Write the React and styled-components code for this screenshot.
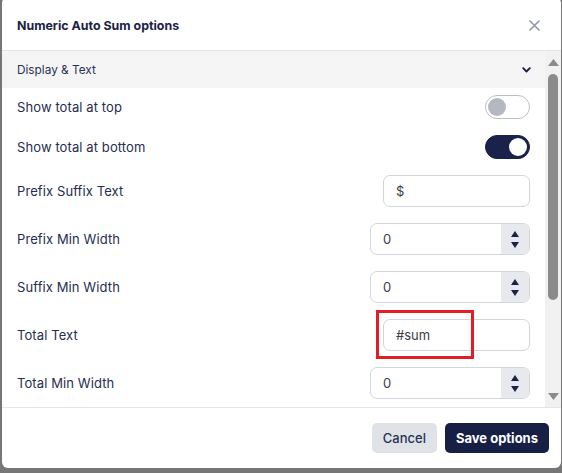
import React from "react";
import styled, { createGlobalStyle } from "styled-components";

const Global = createGlobalStyle`
  html, body { margin: 0; padding: 0; height: 100%; }
  body {
    background: #767676;
    font-family: Inter, "Noto Sans", sans-serif;
    overflow: hidden;
  }
  #root { height: 100%; }
`;

const Page = styled.div`
  height: 473px;
  padding: 0 1px 0 2px;
  box-sizing: border-box;
`;

const Modal = styled.div`
  margin-top: -3px;
  height: 471px;
  background: #fff;
  border-radius: 6px;
  display: flex;
  flex-direction: column;
  overflow: hidden;
`;

const Header = styled.div`
  height: 54px;
  box-sizing: border-box;
  padding: 3px 20px 0 15px;
  display: flex;
  align-items: center;
  justify-content: space-between;
  border-bottom: 1px solid #e3e5ea;
`;

const Title = styled.h2`
  margin: 0;
  font-size: 12.4px;
  font-weight: 700;
  color: #1c2244;
`;

const Close = styled.button`
  border: 0;
  background: none;
  padding: 0;
  width: 14px;
  height: 14px;
  display: flex;
  align-items: center;
  justify-content: center;
  cursor: pointer;
`;

const Body = styled.div`
  height: 356px;
  display: flex;
`;

const Content = styled.div`
  flex: 1;
  overflow: hidden;
`;

const ScrollBar = styled.div`
  width: 16px;
  background: #f1f1f1;
  display: flex;
  flex-direction: column;
  align-items: center;
`;

const ScrollArrow = styled.div`
  height: ${(p) => (p.$down ? "14px" : "15px")};
  display: flex;
  align-items: ${(p) => (p.$down ? "flex-start" : "flex-end")};
  justify-content: center;
`;

const Thumb = styled.div`
  width: 10px;
  height: 226px;
  margin-top: 8px;
  border-radius: 5px;
  background: #8b8b8b;
`;

const Spacer = styled.div`
  flex: 1;
`;

const SectionHead = styled.div`
  height: 37px;
  background: #f5f5f6;
  display: flex;
  align-items: center;
  justify-content: space-between;
  padding: 0 14px 0 15px;
  font-size: 11.8px;
  color: #2a3052;
`;

const Rows = styled.div`
  display: flex;
  flex-direction: column;
  gap: 16px;
  padding: 7px 15px 20px 15px;
`;

const Row = styled.div`
  display: flex;
  align-items: center;
  justify-content: space-between;
  height: ${(p) => (p.$toggle ? "24px" : "32px")};
`;

const Label = styled.span`
  font-size: 13px;
  font-weight: 400;
  letter-spacing: 0.1px;
  color: #262d50;
`;

const Switch = styled.div`
  width: 45px;
  height: 24px;
  box-sizing: border-box;
  border-radius: 12px;
  border: 1px solid ${(p) => (p.$on ? "#1a224a" : "#b9bec6")};
  background: ${(p) => (p.$on ? "#1a224a" : "#fff")};
  display: flex;
  align-items: center;
  justify-content: ${(p) => (p.$on ? "flex-end" : "flex-start")};
  padding: 0 2px;
`;

const Knob = styled.div`
  width: 18px;
  height: 18px;
  border-radius: 50%;
  background: ${(p) => (p.$on ? "#fff" : "#b4b9c1")};
`;

const TextBox = styled.div`
  position: relative;
  width: 147px;
  height: 32px;
`;

const TextInput = styled.input`
  width: 100%;
  height: 100%;
  box-sizing: border-box;
  border: 1px solid #d3d6dc;
  border-radius: 7px;
  padding: 0 12px;
  font-family: inherit;
  font-size: 13px;
  color: #3a3d45;
  outline: none;
`;

const Highlight = styled.div`
  position: absolute;
  left: -7px;
  top: -9px;
  width: 98px;
  height: 49px;
  box-sizing: border-box;
  border: 3px solid #e21d24;
  pointer-events: none;
`;

const NumberBox = styled.div`
  width: 160px;
  height: 32px;
  box-sizing: border-box;
  border: 1px solid #d3d6dc;
  border-radius: 7px;
  display: flex;
  overflow: hidden;
`;

const NumberValue = styled.span`
  flex: 1;
  display: flex;
  align-items: center;
  padding-left: 12px;
  font-size: 13px;
  color: #3a3d45;
`;

const Spinner = styled.div`
  width: 28px;
  background: #e7e9ee;
  display: flex;
  flex-direction: column;
  align-items: center;
  justify-content: center;
  gap: 5px;
`;

const Footer = styled.div`
  flex: 1;
  border-top: 1px solid #e3e5ea;
  display: flex;
  align-items: center;
  justify-content: flex-end;
  gap: 8px;
  padding: 0 12px 0 0;
`;

const Button = styled.button`
  height: 30px;
  border: 0;
  border-radius: 5px;
  padding: 0 11px;
  font-family: inherit;
  font-size: 13px;
  line-height: 30px;
  font-weight: ${(p) => (p.$primary ? 700 : 500)};
  background: ${(p) => (p.$primary ? "#171f45" : "#dfe3e8")};
  color: ${(p) => (p.$primary ? "#fff" : "#283052")};
  cursor: pointer;
`;

const Tri = ({ down }) => (
  <svg width="8" height="6" viewBox="0 0 8 6">
    <path d={down ? "M0 0h8L4 6z" : "M4 0l4 6H0z"} fill="#1c2244" />
  </svg>
);

const BarTri = ({ down }) => (
  <svg width="11" height="7" viewBox="0 0 11 7">
    <path d={down ? "M0 0h11L5.5 7z" : "M5.5 0L11 7H0z"} fill="#8b8b8b" />
  </svg>
);

const NumberField = ({ value }) => (
  <NumberBox>
    <NumberValue>{value}</NumberValue>
    <Spinner>
      <Tri />
      <Tri down />
    </Spinner>
  </NumberBox>
);

export default function App() {
  return (
    <>
      <Global />
      <Page>
        <Modal>
          <Header>
            <Title>Numeric Auto Sum options</Title>
            <Close aria-label="Close">
              <svg width="11" height="11" viewBox="0 0 11 11">
                <path d="M1 1l9 9M10 1l-9 9" stroke="#9096a6" strokeWidth="1.6" strokeLinecap="round" />
              </svg>
            </Close>
          </Header>
          <Body>
            <Content>
              <SectionHead>
                <span>Display &amp; Text</span>
                <svg width="9" height="6" viewBox="0 0 9 6">
                  <path d="M1.2 1.2L4.5 4.5 7.8 1.2" stroke="#1c2244" strokeWidth="1.9" fill="none" strokeLinecap="round" strokeLinejoin="round" />
                </svg>
              </SectionHead>
              <Rows>
                <Row $toggle>
                  <Label>Show total at top</Label>
                  <Switch><Knob /></Switch>
                </Row>
                <Row $toggle>
                  <Label>Show total at bottom</Label>
                  <Switch $on><Knob $on /></Switch>
                </Row>
                <Row>
                  <Label>Prefix Suffix Text</Label>
                  <TextBox><TextInput defaultValue="$" /></TextBox>
                </Row>
                <Row>
                  <Label>Prefix Min Width</Label>
                  <NumberField value="0" />
                </Row>
                <Row>
                  <Label>Suffix Min Width</Label>
                  <NumberField value="0" />
                </Row>
                <Row>
                  <Label>Total Text</Label>
                  <TextBox>
                    <TextInput defaultValue="#sum" />
                    <Highlight />
                  </TextBox>
                </Row>
                <Row>
                  <Label>Total Min Width</Label>
                  <NumberField value="0" />
                </Row>
                <Row>
                  <Label>Decimal Places</Label>
                  <NumberField value="2" />
                </Row>
              </Rows>
            </Content>
            <ScrollBar aria-hidden="true">
              <ScrollArrow><BarTri /></ScrollArrow>
              <Thumb />
              <Spacer />
              <ScrollArrow $down><BarTri down /></ScrollArrow>
            </ScrollBar>
          </Body>
          <Footer>
            <Button>Cancel</Button>
            <Button $primary>Save options</Button>
          </Footer>
        </Modal>
      </Page>
    </>
  );
}
